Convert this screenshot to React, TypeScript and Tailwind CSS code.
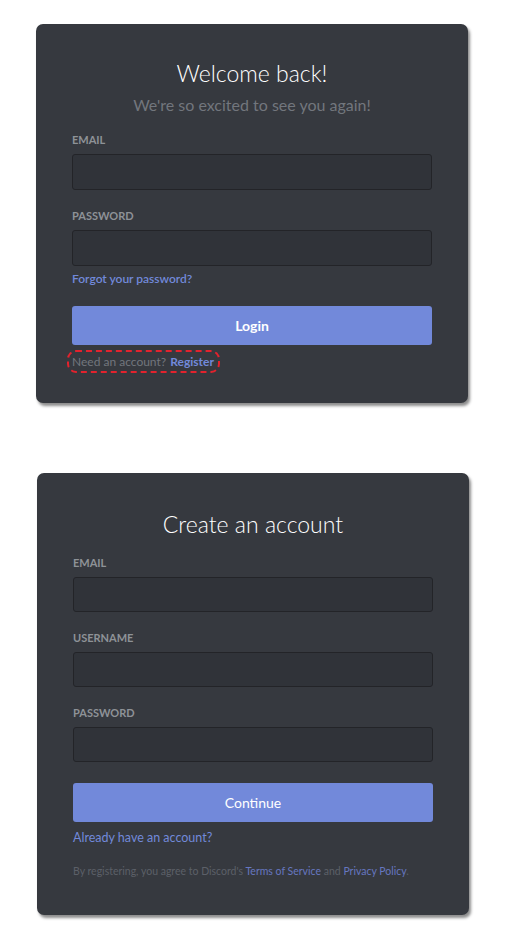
import React from "react";

const font = "font-['Lato','Open_Sans',sans-serif]";

type FieldProps = { label: string; className?: string; h?: string };

const Field: React.FC<FieldProps> = ({ label, className = "", h = "h-[36px]" }) => (
  <div className={className}>
    <div className="text-[11px] leading-[14px] font-bold text-[#8e9297]">{label}</div>
    <div className={`mt-[7px] ${h} w-full rounded-[3px] border border-[#232428] bg-[#303339]`} />
  </div>
);

const App: React.FC = () => {
  return (
    <div className={`min-h-[929px] w-[505px] bg-white ${font}`}>
      {/* login card */}
      <div className="ml-[36px] pt-[24px]">
        <div className="flex h-[379px] w-[432px] flex-col rounded-[7px] bg-[#36393f] px-[36px] pt-[34px] shadow-[2px_3px_3px_rgba(0,0,0,0.45)]">
          <h1 className="text-center text-[23px] leading-[30px] font-light text-white">
            Welcome back!
          </h1>
          <p className="mt-[7px] text-center text-[16px] leading-[20px] text-[#72767d]">
            We're so excited to see you again!
          </p>
          <Field label="EMAIL" className="mt-[18px]" />
          <Field label="PASSWORD" className="mt-[19px]" />
          <a className="mt-[5px] text-[12px] leading-[16px] font-semibold text-[#7289da]">
            Forgot your password?
          </a>
          <button className="mt-[19px] h-[39px] w-full rounded-[3px] bg-[#7289da] text-[14px] font-bold text-white">
            Login
          </button>
          <div className="-ml-[5px] mt-[5px] flex h-[23px] w-[153px] items-center rounded-[9px] border-2 border-dashed border-[#e3222d] pl-[3px] text-[12px] leading-[16px] whitespace-nowrap">
            <span className="text-[#72767d]">Need an account?</span>
            <span className="ml-[4px] font-bold text-[#7289da]">Register</span>
          </div>
        </div>
      </div>

      {/* register card */}
      <div className="ml-[37px] mt-[70px] pb-[14px]">
        <div className="flex h-[442px] w-[432px] flex-col rounded-[7px] bg-[#36393f] px-[36px] pt-[36px] shadow-[2px_3px_3px_rgba(0,0,0,0.45)]">
          <h1 className="text-center text-[23px] leading-[30px] font-light text-white">
            Create an account
          </h1>
          <Field label="EMAIL" className="mt-[17px]" h="h-[35px]" />
          <Field label="USERNAME" className="mt-[19px]" h="h-[35px]" />
          <Field label="PASSWORD" className="mt-[19px]" h="h-[35px]" />
          <button className="mt-[21px] h-[39px] w-full rounded-[3px] bg-[#7289da] text-[14px] text-white">
            Continue
          </button>
          <a className="mt-[8px] text-[12.5px] leading-[16px] text-[#7289da]">
            Already have an account?
          </a>
          <p className="mt-[18px] text-[10.5px] leading-[14px] whitespace-nowrap text-[#5c6068]">
            By registering, you agree to Discord's{" "}
            <span className="text-[#6677c0]">Terms of Service</span> and{" "}
            <span className="text-[#6677c0]">Privacy Policy</span>.
          </p>
        </div>
      </div>
    </div>
  );
};

export default App;
